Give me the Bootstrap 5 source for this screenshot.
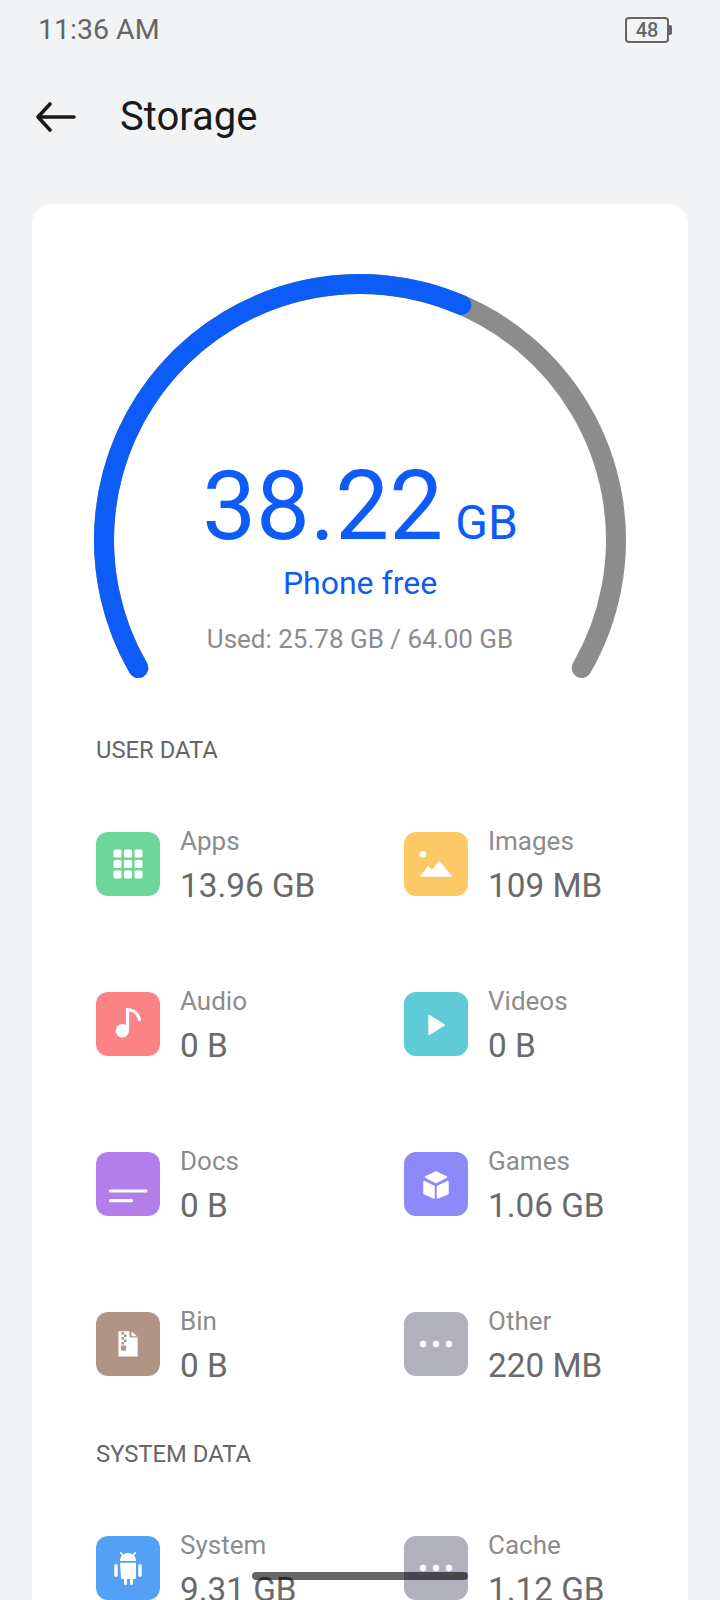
<!DOCTYPE html>
<html lang="en">
<head>
    <meta charset="UTF-8">
    <meta name="viewport" content="width=device-width, initial-scale=1.0">
    <title>Storage</title>
    <link href="https://cdn.jsdelivr.net/npm/bootstrap@5.3.2/dist/css/bootstrap.min.css" rel="stylesheet">
    <style>
        html, body { height: 1600px; overflow: hidden; }
        body { background: #f1f3f5; font-family: Roboto, "Liberation Sans", sans-serif; }
        .screen { height: 1600px; overflow: hidden; }

        /* status bar */
        .status-bar { height: 60px; padding: 0 51px 0 38px; color: #666; }
        .status-time { font-size: 28.5px; line-height: 60px; }
        .battery { width: 44px; height: 26px; border: 2px solid #666; border-radius: 4px; font-size: 20px; font-weight: 500; line-height: 22px; text-align: center; position: relative; }
        .battery::after { content: ""; position: absolute; right: -5px; top: 6px; width: 3px; height: 10px; background: #666; border-radius: 0 2px 2px 0; }

        /* title */
        .title-bar { height: 114px; padding-left: 36px; gap: 44px; }
        .page-title { font-size: 40px; font-weight: 400; color: #1a1a1a; margin: 0; line-height: 114px; }

        /* card */
        .storage-card { margin: 30px 32px 0; background: #fff; border-radius: 20px; padding-left: 64px; height: 1500px; }
        .gauge-wrap { position: relative; margin-left: -64px; height: 514px; }
        .gauge-wrap svg { display: block; }
        .gauge-text { position: absolute; left: 0; right: 0; top: 0; text-align: center; white-space: nowrap; }
        .free-line { position: absolute; left: 0; right: 0; top: 246px; line-height: 112px; color: #0d5cf8; }
        .free-num { font-size: 96px; }
        .free-unit { font-size: 48px; margin-left: 12px; }
        .free-label { position: absolute; left: 0; right: 0; top: 359px; line-height: 40px; font-size: 32px; color: #0d5cf8; }
        .used-label { position: absolute; left: 0; right: 0; top: 417px; line-height: 36px; font-size: 26px; color: #8c8c8c; }

        .section-title { font-size: 23.8px; font-weight: 400; line-height: 30px; color: #666; margin: 0; }
        .section-user { margin-top: 17px; }
        .section-system { margin-top: 63px; }
        .stat-grid { display: grid; grid-template-columns: 308px 1fr; grid-auto-rows: 64px; row-gap: 96px; margin-top: 67px; }
        .stat-item { gap: 20px; }
        .stat-icon { width: 64px; height: 64px; border-radius: 12px; flex: none; }
        .stat-icon svg { display: block; }
        .stat-label { font-size: 26px; line-height: 18px; color: #8c8c8c; }
        .stat-value { font-size: 33.3px; line-height: 40px; margin-top: 16px; color: #6a6a6a; white-space: nowrap; }

        .bg-apps { background: #6dd49a; }
        .bg-images { background: #fdc967; }
        .bg-audio { background: #fc8386; }
        .bg-videos { background: #5fcbd6; }
        .bg-docs { background: #b37eea; }
        .bg-games { background: #8b8af8; }
        .bg-bin { background: #b19486; }
        .bg-other { background: #b1b1bd; }
        .bg-system { background: #53a0f5; }

        .home-bar { position: fixed; left: 252px; top: 1572px; width: 216px; height: 8px; border-radius: 4px; background: rgba(0, 0, 0, .6); }
    </style>
</head>

<body>
    <div class="screen">
        <!-- status bar -->
        <div class="status-bar d-flex justify-content-between align-items-center">
            <span class="status-time">11:36 AM</span>
            <span class="battery">48</span>
        </div>

        <!-- title -->
        <div class="title-bar d-flex align-items-center">
            <svg width="40" height="30" viewBox="0 0 40 30" fill="none" stroke="#1a1a1a" stroke-width="3.6" stroke-linecap="round" stroke-linejoin="round">
                <path d="M38 15H2M14 2L2 15l12 13"/>
            </svg>
            <h1 class="page-title">Storage</h1>
        </div>

        <div class="storage-card">
            <!-- gauge -->
            <div class="gauge-wrap">
                <svg width="656" height="514" viewBox="32 204 656 514" fill="none" stroke-width="20" stroke-linecap="round">
                    <path d="M138.3 668A256 256 0 1 1 581.7 668" stroke="#8c8c8c"/>
                    <path d="M138.3 668A256 256 0 0 1 461.3 304.9" stroke="#0d5cf8"/>
                </svg>
                <div class="gauge-text">
                    <div class="free-line"><span class="free-num">38.22</span><span class="free-unit">GB</span></div>
                    <div class="free-label">Phone free</div>
                    <div class="used-label">Used: 25.78 GB / 64.00 GB</div>
                </div>
            </div>

            <h2 class="section-title section-user">USER DATA</h2>
            <div class="stat-grid">
                <div class="stat-item d-flex">
                    <div class="stat-icon bg-apps">
                        <svg width="64" height="64" viewBox="0 0 64 64" fill="#fff">
                            <rect x="17.5" y="17.5" width="8" height="8" rx="1.6"/><rect x="28" y="17.5" width="8" height="8" rx="1.6"/><rect x="38.5" y="17.5" width="8" height="8" rx="1.6"/>
                            <rect x="17.5" y="28" width="8" height="8" rx="1.6"/><rect x="28" y="28" width="8" height="8" rx="1.6"/><rect x="38.5" y="28" width="8" height="8" rx="1.6"/>
                            <rect x="17.5" y="38.5" width="8" height="8" rx="1.6"/><rect x="28" y="38.5" width="8" height="8" rx="1.6"/><rect x="38.5" y="38.5" width="8" height="8" rx="1.6"/>
                        </svg>
                    </div>
                    <div><div class="stat-label">Apps</div><div class="stat-value">13.96 GB</div></div>
                </div>
                <div class="stat-item d-flex">
                    <div class="stat-icon bg-images">
                        <svg width="64" height="64" viewBox="0 0 64 64" fill="#fff">
                            <circle cx="19" cy="22.3" r="3.3"/>
                            <path d="M17 44l7.300-9 3.700 4 7.300-9 11.700 14z" stroke="#fff" stroke-width="1.500" stroke-linejoin="round"/>
                        </svg>
                    </div>
                    <div><div class="stat-label">Images</div><div class="stat-value">109 MB</div></div>
                </div>
                <div class="stat-item d-flex">
                    <div class="stat-icon bg-audio">
                        <svg width="64" height="64" viewBox="0 0 64 64" fill="none" stroke="#fff">
                            <circle cx="26.3" cy="38.7" r="6.7" fill="#fff" stroke="none"/>
                            <path d="M31.500 38V17.500c6 .5 10.500 4 12 10" stroke-width="3.200" stroke-linecap="round"/>
                        </svg>
                    </div>
                    <div><div class="stat-label">Audio</div><div class="stat-value">0 B</div></div>
                </div>
                <div class="stat-item d-flex">
                    <div class="stat-icon bg-videos">
                        <svg width="64" height="64" viewBox="0 0 64 64" fill="#fff" stroke="#fff" stroke-width="2" stroke-linejoin="round">
                            <path d="M25.300 24v18L40 33z"/>
                        </svg>
                    </div>
                    <div><div class="stat-label">Videos</div><div class="stat-value">0 B</div></div>
                </div>
                <div class="stat-item d-flex">
                    <div class="stat-icon bg-docs">
                        <svg width="64" height="64" viewBox="0 0 64 64" fill="none" stroke="#fff" stroke-width="3.200" stroke-linecap="round">
                            <path d="M14.500 39h35.500M14.500 48.700h21"/>
                        </svg>
                    </div>
                    <div><div class="stat-label">Docs</div><div class="stat-value">0 B</div></div>
                </div>
                <div class="stat-item d-flex">
                    <div class="stat-icon bg-games">
                        <svg width="64" height="64" viewBox="0 0 64 64" fill="#fff" stroke="#fff" stroke-width="1.500" stroke-linejoin="round">
                            <path d="M32 20l10.500 5-10.500 5.500-10.500-5.500z"/>
                            <path d="M20 29.500l10 5v11.500l-10-4.500z"/>
                            <path d="M44 29.500l-10.500 5v11.500l10.500-4.500z"/>
                        </svg>
                    </div>
                    <div><div class="stat-label">Games</div><div class="stat-value">1.06 GB</div></div>
                </div>
                <div class="stat-item d-flex">
                    <div class="stat-icon bg-bin">
                        <svg width="64" height="64" viewBox="0 0 64 64">
                            <path d="M22.500 19.300h11v6.200h8.200v19h-19.200z" fill="#fff"/>
                            <path d="M35.500 19.300l5.500 5h-5.500z" fill="#fff"/>
                            <path d="M25.500 20h2.500v2.500h-2.500zM28 22.500h2.500v2.500h-2.500zM25.500 25h2.500v2.500h-2.500zM28 27.500h2.500v2.500h-2.500zM25.500 30h2.500v2.500h-2.500zM25 33.500h5v5h-5z" fill="#b19486"/>
                        </svg>
                    </div>
                    <div><div class="stat-label">Bin</div><div class="stat-value">0 B</div></div>
                </div>
                <div class="stat-item d-flex">
                    <div class="stat-icon bg-other">
                        <svg width="64" height="64" viewBox="0 0 64 64" fill="#fff">
                            <circle cx="19" cy="32" r="3.200"/><circle cx="32" cy="32" r="3.200"/><circle cx="45" cy="32" r="3.200"/>
                        </svg>
                    </div>
                    <div><div class="stat-label">Other</div><div class="stat-value">220 MB</div></div>
                </div>
            </div>

            <h2 class="section-title section-system">SYSTEM DATA</h2>
            <div class="stat-grid">
                <div class="stat-item d-flex">
                    <div class="stat-icon bg-system">
                        <svg width="64" height="64" viewBox="0 0 64 64" fill="#fff">
                            <path d="M24 25a8 8 0 0 1 16 0z"/>
                            <path d="M26.500 19l-2-2.500M37.500 19l2-2.500" stroke="#fff" stroke-width="1.500" stroke-linecap="round"/>
                            <path d="M24 26.700h16v14.800a1.500 1.500 0 0 1-1.500 1.500h-1.500v4.500a1.500 1.500 0 0 1-3 0v-4.500h-3v4.500a1.500 1.500 0 0 1-3 0v-4.500h-1.500a1.500 1.500 0 0 1-1.500-1.500z"/>
                            <rect x="18.300" y="28" width="3.400" height="13" rx="1.700"/>
                            <rect x="42.300" y="28" width="3.400" height="13" rx="1.700"/>
                        </svg>
                    </div>
                    <div><div class="stat-label">System</div><div class="stat-value">9.31 GB</div></div>
                </div>
                <div class="stat-item d-flex">
                    <div class="stat-icon bg-other">
                        <svg width="64" height="64" viewBox="0 0 64 64" fill="#fff">
                            <circle cx="19" cy="32" r="3.200"/><circle cx="32" cy="32" r="3.200"/><circle cx="45" cy="32" r="3.200"/>
                        </svg>
                    </div>
                    <div><div class="stat-label">Cache</div><div class="stat-value">1.12 GB</div></div>
                </div>
            </div>
        </div>
    </div>

    <div class="home-bar"></div>

    <script src="https://cdn.jsdelivr.net/npm/bootstrap@5.3.2/dist/js/bootstrap.bundle.min.js"></script>
</body>
</html>
